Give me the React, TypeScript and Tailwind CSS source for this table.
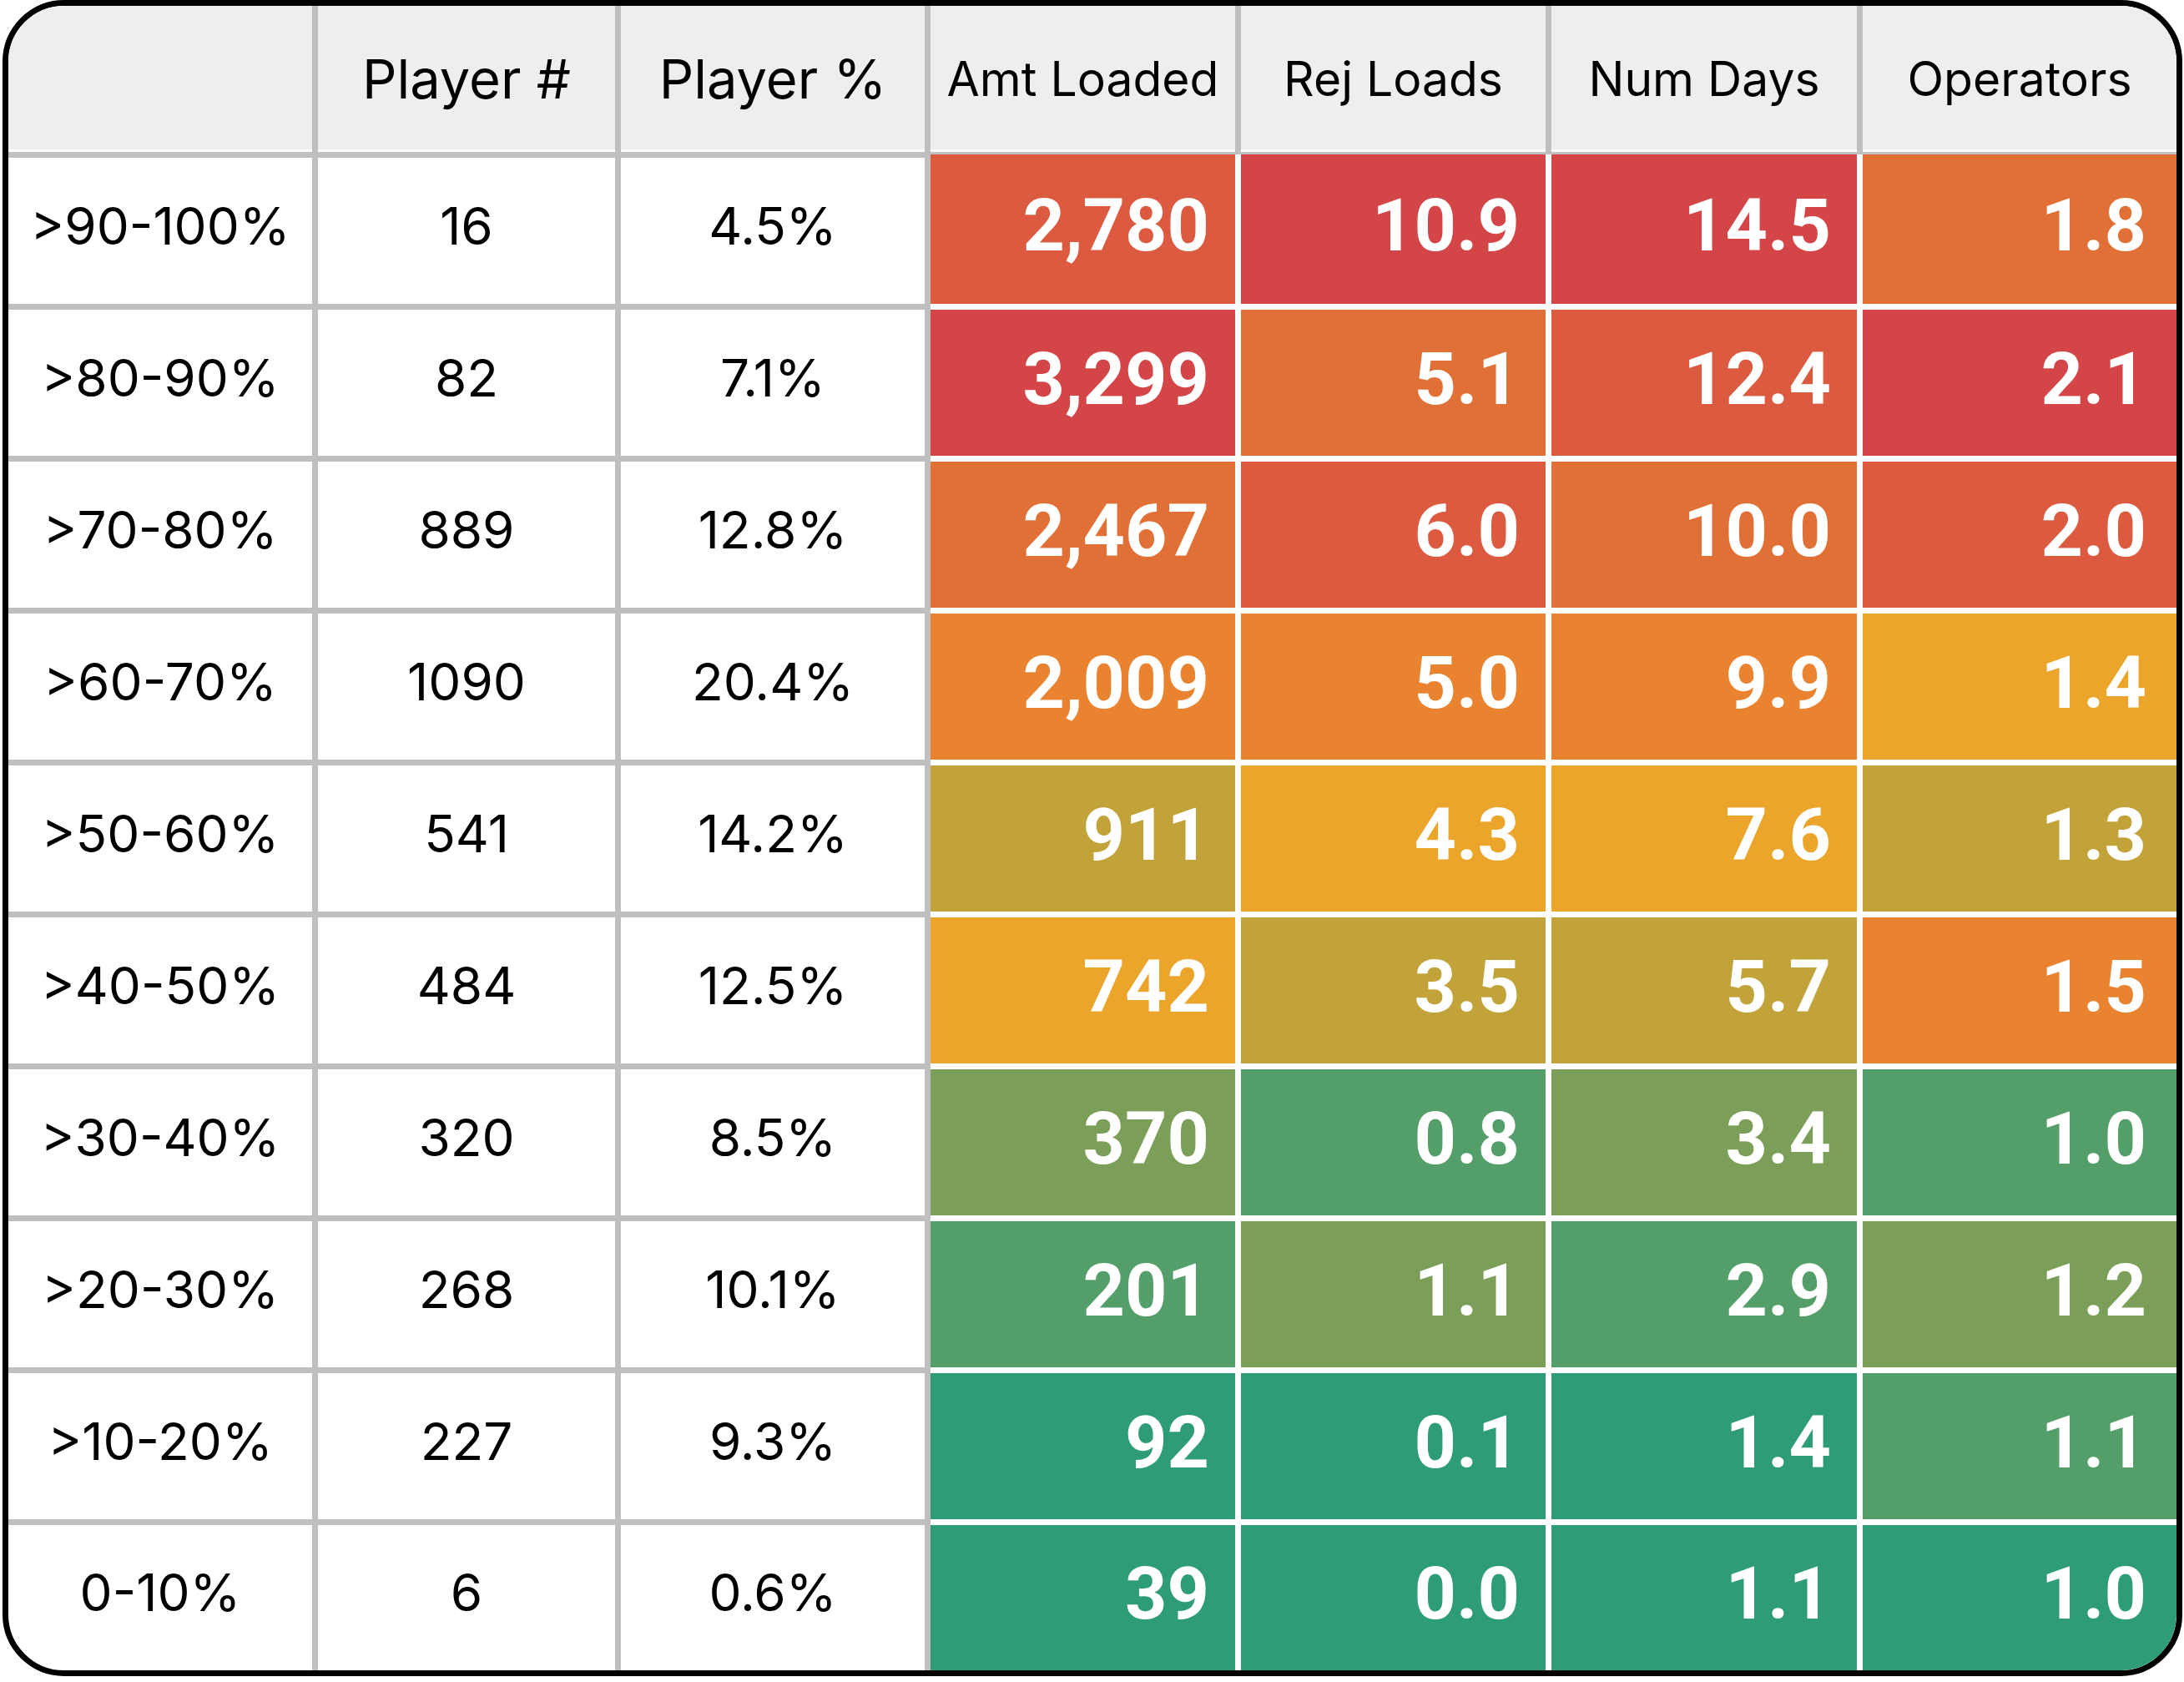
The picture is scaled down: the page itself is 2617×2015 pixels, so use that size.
import React from 'react';

type Tone = 'dr' | 'ro' | 'or' | 'o2' | 'yl' | 'ol' | 'og' | 'gr' | 'tl';

// heat colours, written out so Tailwind picks them up
const toneBg: Record<Tone, string> = {
  dr: 'bg-[#d44547]',
  ro: 'bg-[#dc5a40]',
  or: 'bg-[#e17036]',
  o2: 'bg-[#ea832f]',
  yl: 'bg-[#eba52a]',
  ol: 'bg-[#c2a33a]',
  og: 'bg-[#7b9f58]',
  gr: 'bg-[#549e69]',
  tl: 'bg-[#2f9c78]',
};

interface Row {
  band: string;
  count: string;
  share: string;
  cells: [string, Tone][];
}

const rows: Row[] = [
  { band: '>90-100%', count: '16', share: '4.5%', cells: [['2,780', 'ro'], ['10.9', 'dr'], ['14.5', 'dr'], ['1.8', 'or']] },
  { band: '>80-90%', count: '82', share: '7.1%', cells: [['3,299', 'dr'], ['5.1', 'or'], ['12.4', 'ro'], ['2.1', 'dr']] },
  { band: '>70-80%', count: '889', share: '12.8%', cells: [['2,467', 'or'], ['6.0', 'ro'], ['10.0', 'or'], ['2.0', 'ro']] },
  { band: '>60-70%', count: '1090', share: '20.4%', cells: [['2,009', 'o2'], ['5.0', 'o2'], ['9.9', 'o2'], ['1.4', 'yl']] },
  { band: '>50-60%', count: '541', share: '14.2%', cells: [['911', 'ol'], ['4.3', 'yl'], ['7.6', 'yl'], ['1.3', 'ol']] },
  { band: '>40-50%', count: '484', share: '12.5%', cells: [['742', 'yl'], ['3.5', 'ol'], ['5.7', 'ol'], ['1.5', 'o2']] },
  { band: '>30-40%', count: '320', share: '8.5%', cells: [['370', 'og'], ['0.8', 'gr'], ['3.4', 'og'], ['1.0', 'gr']] },
  { band: '>20-30%', count: '268', share: '10.1%', cells: [['201', 'gr'], ['1.1', 'og'], ['2.9', 'gr'], ['1.2', 'og']] },
  { band: '>10-20%', count: '227', share: '9.3%', cells: [['92', 'tl'], ['0.1', 'tl'], ['1.4', 'tl'], ['1.1', 'gr']] },
  { band: '0-10%', count: '6', share: '0.6%', cells: [['39', 'tl'], ['0.0', 'tl'], ['1.1', 'tl'], ['1.0', 'tl']] },
];

const sans = "font-['Inter','Liberation_Sans',sans-serif]";
const bold = "font-['Roboto','Liberation_Sans',sans-serif] font-bold";

function HeaderCell({ label, big, last }: { label: string; big?: boolean; last?: boolean }) {
  return (
    <div
      className={`flex items-center justify-center bg-[#eeeeee] border-b-[7px] border-[#bfbfbf] shadow-[inset_0_-3px_0_#ffffff] ${
        last ? '' : 'border-r-[7px]'
      } ${sans} text-black ${big ? 'text-[65px]' : 'text-[57px]'} leading-none`}
    >
      {label}
    </div>
  );
}

export default function App() {
  return (
    <div className="min-h-screen bg-white pl-[3px]">
      <div className="w-[2612px] border-[7px] border-black rounded-[74px] overflow-hidden bg-white">
        <div className="grid grid-cols-[371px_363px_371px_372px_372px_373px_1fr] grid-rows-[182px_repeat(9,182px)_174px]">
          <HeaderCell label="" />
          <HeaderCell label="Player #" big />
          <HeaderCell label="Player %" big />
          <HeaderCell label="Amt Loaded" />
          <HeaderCell label="Rej Loads" />
          <HeaderCell label="Num Days" />
          <HeaderCell label="Operators" last />

          {rows.map((r, i) => {
            const lastRow = i === rows.length - 1;
            const plain = `flex items-center justify-center pb-[12px] border-r-[7px] border-[#bfbfbf] ${
              lastRow ? '' : 'border-b-[7px]'
            } ${sans} text-[62px] leading-none text-black`;
            return (
              <React.Fragment key={r.band}>
                <div className={plain}>{r.band}</div>
                <div className={plain}>{r.count}</div>
                <div className={plain}>{r.share}</div>
                {r.cells.map(([v, tone], j) => (
                  <div
                    key={j}
                    className={`flex items-center justify-end pb-[10px] border-white ${toneBg[tone]} ${
                      j === 3 ? 'pr-[36px]' : 'pr-[31px] border-r-[7px]'
                    } ${lastRow ? '' : 'border-b-[7px]'} ${i === 0 ? '-mt-[4px]' : ''} ${bold} text-[88px] leading-none text-white`}
                  >
                    {v}
                  </div>
                ))}
              </React.Fragment>
            );
          })}
        </div>
      </div>
    </div>
  );
}
